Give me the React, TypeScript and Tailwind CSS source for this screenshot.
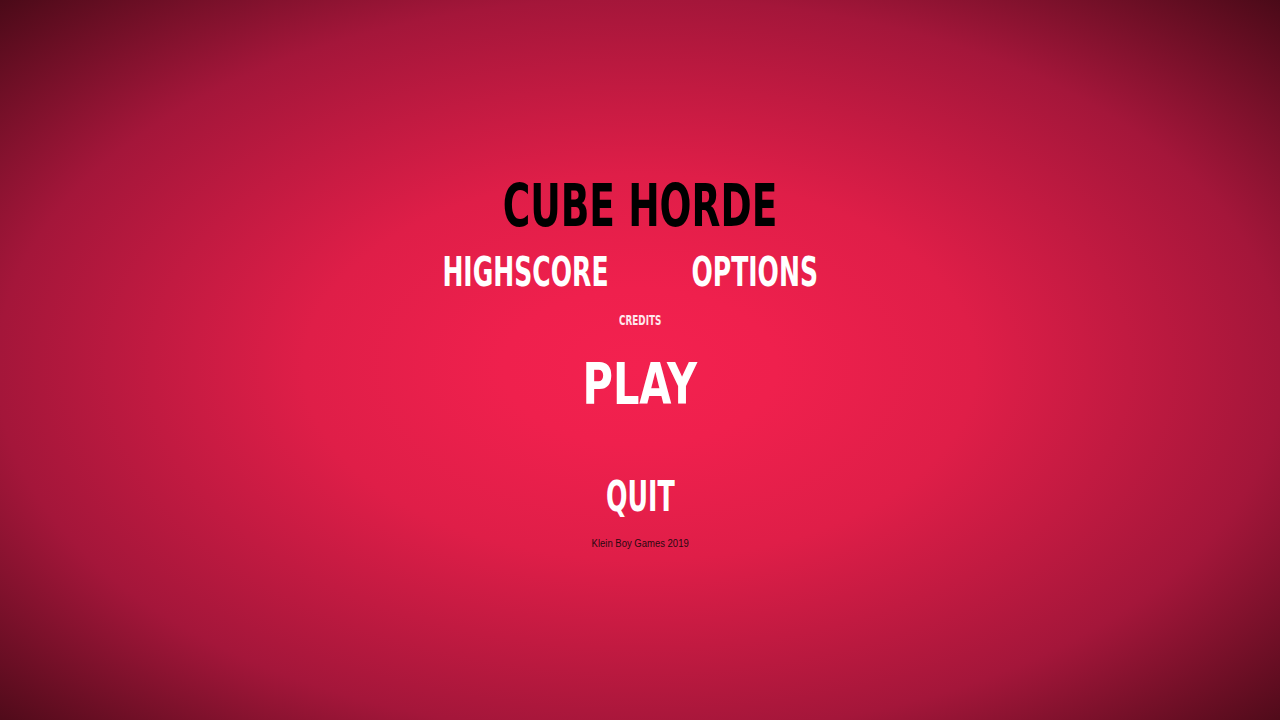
import React from "react";

export default function App() {
  return (
    <div className="w-full h-[720px] overflow-hidden bg-[radial-gradient(ellipse_farthest-corner_at_50%_51%,#f3214f_0%,#ef204d_15%,#df1e48_37%,#a4163a_71%,#4a0a18_100%)] flex flex-col items-center pt-[176px] font-['DejaVu_Sans_Condensed','DejaVu_Sans',sans-serif] font-bold">
      <h1 className="text-[59px] leading-[59px] text-black scale-x-[0.708] whitespace-nowrap">
        CUBE HORDE
      </h1>
      <div className="mt-[17px] mr-[19px] flex items-center gap-[122px] scale-x-[0.68]">
        <button className="text-[41px] leading-[41px] text-white whitespace-nowrap">HIGHSCORE</button>
        <button className="text-[41px] leading-[41px] text-white whitespace-nowrap">OPTIONS</button>
      </div>
      <button className="mt-[20px] text-[14px] leading-[14px] text-white/90 scale-x-[0.7] whitespace-nowrap">CREDITS</button>
      <button className="mt-[29px] text-[57px] leading-[57px] text-white scale-x-[0.81] whitespace-nowrap">PLAY</button>
      <button className="mt-[63px] text-[42px] leading-[42px] text-white scale-x-[0.67] whitespace-nowrap">QUIT</button>
      <p className="mt-[20px] font-['Liberation_Sans',Arial,sans-serif] font-normal text-[10px] leading-[11px] text-[#2a0810] scale-x-[0.95] whitespace-nowrap">
        Klein Boy Games 2019
      </p>
    </div>
  );
}
